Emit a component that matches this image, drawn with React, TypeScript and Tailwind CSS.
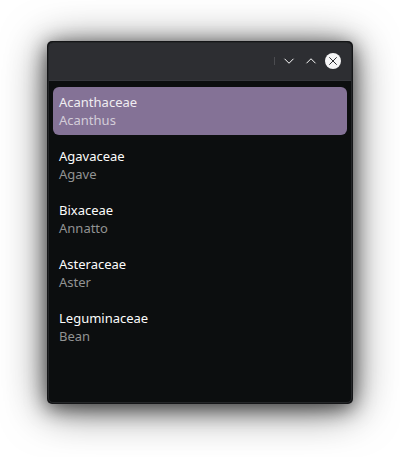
const items = [
  ["Acanthaceae", "Acanthus"],
  ["Agavaceae", "Agave"],
  ["Bixaceae", "Annatto"],
  ["Asteraceae", "Aster"],
  ["Leguminaceae", "Bean"],
];

export default function App() {
  return (
    <div className="h-[457px] w-[400px] overflow-hidden bg-white pl-[47px] pt-[41px] font-['Noto_Sans',sans-serif]">
      <div className="h-[363px] w-[306px] rounded-[5px] bg-[#141517] p-px shadow-[0_5px_44px_rgba(0,0,0,0.6),0_4px_20px_rgba(0,0,0,0.6)]">
        <div className="h-full overflow-hidden rounded-[5px] border border-[#242628] bg-[#0c0e0f]">
          <header className="-mx-px -mt-px flex h-[39px] items-center justify-end rounded-t-[5px] border border-[#36373c] bg-[#2d2e32] pr-[10px] pb-px">
            <span className="mr-[8px] h-2 w-px bg-[#4b4c50]" />
            <svg width="58" height="18" viewBox="0 0 58 18" fill="none">
              <path d="M1.5 6.75 6 11.25 10.5 6.75M23.5 11.25 28 6.75 32.5 11.25" stroke="#fcfcfc" />
              <circle cx="50" cy="9" r="8" fill="#f6f6f7" />
              <path d="m46.3 5.3 7.4 7.4m0-7.4-7.4 7.4" stroke="#2d2e32" />
            </svg>
          </header>
          <main className="flex flex-col gap-[6px] px-[4px] pt-[6px]">
            {items.map(([family, plant], i) => (
              <div key={family} className={`h-12 rounded-[6px] px-[6px] pt-[6px] text-[13px] leading-[18px] ${i === 0 ? "bg-[#847296]" : ""}`}>
                <div className={i === 0 ? "text-[#f0edf2]" : "text-[#fcfcfc]"}>{family}</div>
                <div className={i === 0 ? "text-[#d3cdd9]" : "text-[#929393]"}>{plant}</div>
              </div>
            ))}
          </main>
        </div>
      </div>
    </div>
  );
}
